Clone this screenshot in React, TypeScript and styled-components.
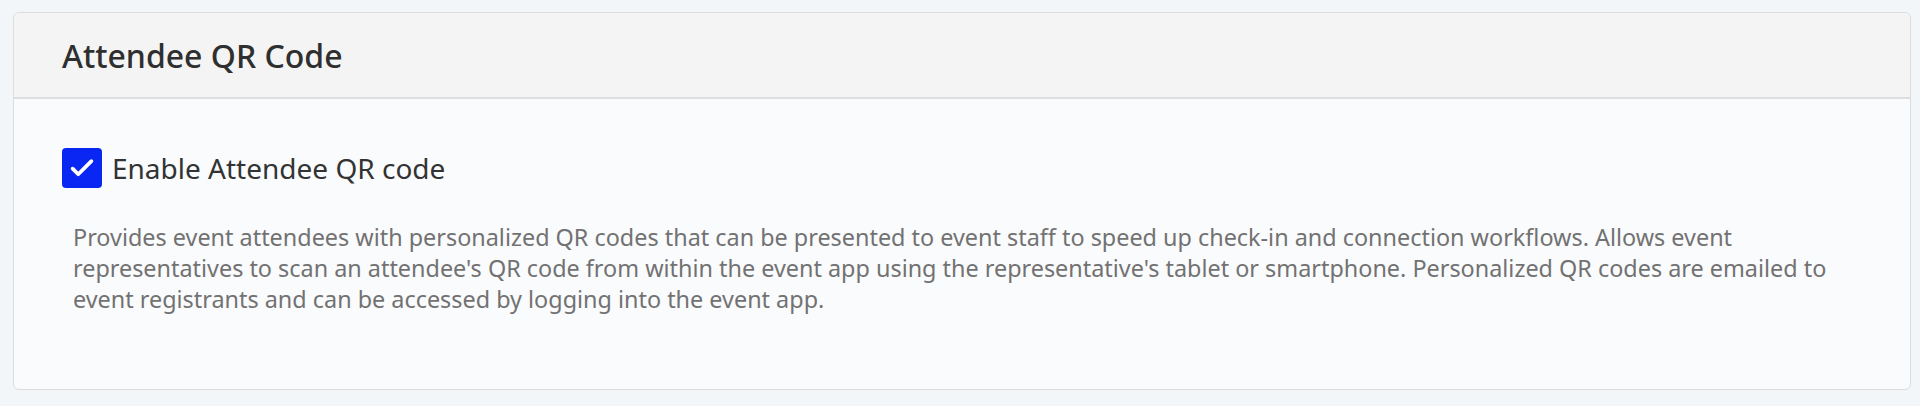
import React, { useState } from "react";
import styled, { createGlobalStyle } from "styled-components";

const GlobalStyle = createGlobalStyle`
  html, body {
    margin: 0;
    padding: 0;
    background: #f3f6f9;
    font-family: "Noto Sans", "Open Sans", sans-serif;
  }
`;

const Page = styled.div`
  padding: 12px 9px 17px 13px;
`;

const Card = styled.section`
  border: 1px solid #dcdcdc;
  border-radius: 6px;
  background: #fafbfd;
  overflow: hidden;
`;

const CardHeader = styled.header`
  height: 84px;
  display: flex;
  align-items: center;
  padding: 0 48px;
  background: #f4f4f4;
  border-bottom: 2px solid #dedede;
`;

const Title = styled.h2`
  margin: 0;
  font-size: 32px;
  font-weight: 500;
  color: #2f2f2f;
`;

const CardBody = styled.div`
  padding: 49px 70px 74px 48px;
`;

const CheckRow = styled.label`
  display: flex;
  align-items: center;
  gap: 10px;
  cursor: pointer;
`;

const Box = styled.span<{ $checked: boolean }>`
  width: 40px;
  height: 40px;
  border-radius: 4px;
  display: flex;
  align-items: center;
  justify-content: center;
  background: ${(p) => (p.$checked ? "#0a26f2" : "#fff")};
  border: ${(p) => (p.$checked ? "none" : "2px solid #aaa")};
  box-sizing: border-box;
`;

const Label = styled.span`
  font-size: 28px;
  color: #333;
`;

const Description = styled.p`
  margin: 34px 0 0 11px;
  font-size: 23.4px;
  line-height: 31px;
  color: #727272;
`;

export default function App() {
  const [checked, setChecked] = useState(true);

  return (
    <>
      <GlobalStyle />
      <Page>
        <Card>
          <CardHeader>
            <Title>Attendee QR Code</Title>
          </CardHeader>
          <CardBody>
            <CheckRow onClick={() => setChecked(!checked)}>
              <Box $checked={checked}>
                {checked && (
                  <svg width="30" height="30" viewBox="0 0 24 24" fill="none">
                    <path
                      d="M4.5 12.5l4.5 4.5L19.5 6.5"
                      stroke="#fff"
                      strokeWidth="3"
                      strokeLinecap="round"
                      strokeLinejoin="round"
                    />
                  </svg>
                )}
              </Box>
              <Label>Enable Attendee QR code</Label>
            </CheckRow>
            <Description>
              Provides event attendees with personalized QR codes that can be
              presented to event staff to speed up check-in and connection
              workflows. Allows event representatives to scan an attendee's QR
              code from within the event app using the representative's tablet
              or smartphone. Personalized QR codes are emailed to event
              registrants and can be accessed by logging into the event app.
            </Description>
          </CardBody>
        </Card>
      </Page>
    </>
  );
}
